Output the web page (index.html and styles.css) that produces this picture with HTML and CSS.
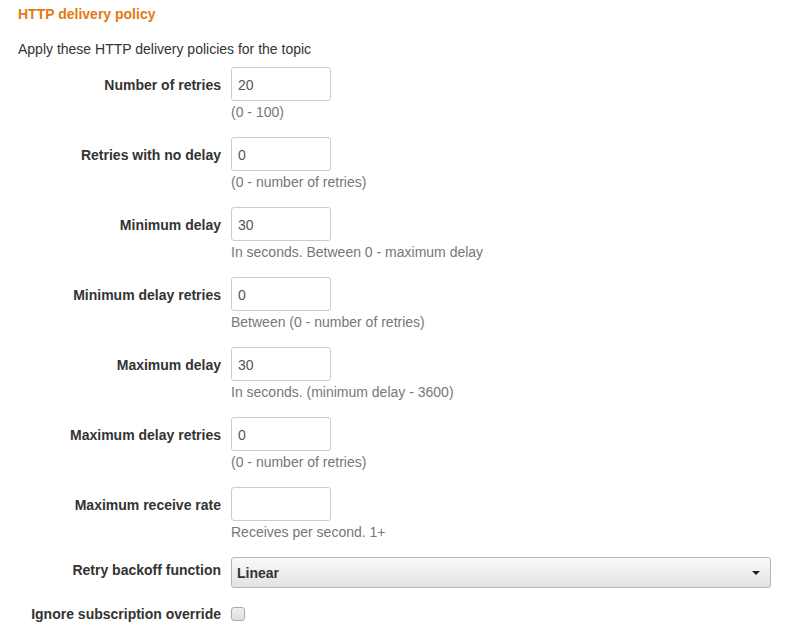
FILE: index.html
```html
<!DOCTYPE html>
<html>
<head>
<meta charset="utf-8">
<link rel="stylesheet" href="styles.css">
</head>
<body>
<div class="page">
  <h2 class="title">HTTP delivery policy</h2>
  <p class="desc">Apply these HTTP delivery policies for the topic</p>
  <div class="form">
    <div class="row">
      <label class="lbl">Number of retries</label>
      <div class="ctl"><div class="input">20</div><div class="help">(0 - 100)</div></div>
    </div>
    <div class="row">
      <label class="lbl">Retries with no delay</label>
      <div class="ctl"><div class="input">0</div><div class="help">(0 - number of retries)</div></div>
    </div>
    <div class="row">
      <label class="lbl">Minimum delay</label>
      <div class="ctl"><div class="input">30</div><div class="help">In seconds. Between 0 - maximum delay</div></div>
    </div>
    <div class="row">
      <label class="lbl">Minimum delay retries</label>
      <div class="ctl"><div class="input">0</div><div class="help">Between (0 - number of retries)</div></div>
    </div>
    <div class="row">
      <label class="lbl">Maximum delay</label>
      <div class="ctl"><div class="input">30</div><div class="help">In seconds. (minimum delay - 3600)</div></div>
    </div>
    <div class="row">
      <label class="lbl">Maximum delay retries</label>
      <div class="ctl"><div class="input">0</div><div class="help">(0 - number of retries)</div></div>
    </div>
    <div class="row">
      <label class="lbl">Maximum receive rate</label>
      <div class="ctl"><div class="input"></div><div class="help">Receives per second. 1+</div></div>
    </div>
    <div class="row row-select">
      <label class="lbl">Retry backoff function</label>
      <div class="ctl wide"><div class="select"><span>Linear</span><span class="caret"></span></div></div>
    </div>
    <div class="row row-check">
      <label class="lbl">Ignore subscription override</label>
      <div class="ctl"><span class="check"></span></div>
    </div>
  </div>
</div>
</body>
</html>
```
FILE: styles.css
```css
html, body { margin: 0; padding: 0; background: #fff; }
body { font-family: "Liberation Sans", Arial, sans-serif; font-size: 14px; color: #333; }
.page { padding: 5px 18px 0 18px; }
.title { margin: 0; font-size: 14px; font-weight: bold; color: #e47911; line-height: 18px; }
.desc { margin: 17px 0 0 0; line-height: 18px; }
.form { margin-top: 9px; }
.row { display: flex; align-items: flex-start; height: 70px; }
.lbl { width: 203px; flex: none; text-align: right; font-weight: bold; padding-top: 10px; line-height: 17px; margin-right: 10px; color: #333; }
.ctl { display: flex; flex-direction: column; }
.wide { flex: 1; }
.input { width: 86px; height: 32px; border: 1px solid #ccc; border-radius: 3px; padding: 0 6px; line-height: 34px; color: #555; box-sizing: content-box; overflow: hidden; }
.help { color: #777; line-height: 18px; margin-top: 2px; }
.row-select { height: 49px; }
.row-select .lbl { padding-top: 5px; }
.select { height: 29px; border: 1px solid #b5b5b5; border-radius: 3px; background: linear-gradient(#fafafa, #e2e2e2); display: flex; align-items: center; justify-content: space-between; padding: 0 10px 0 5px; font-weight: bold; color: #333; margin-right: 15px; }
.caret { width: 0; height: 0; border-left: 4px solid transparent; border-right: 4px solid transparent; border-top: 4px solid #222; }
.row-check { height: 30px; }
.row-check .lbl { padding-top: 0; }
.check { display: block; width: 12px; height: 12px; border: 1px solid #aaa; border-radius: 3px; background: linear-gradient(#f0f0f0, #ddd); margin-top: 1px; }
```
